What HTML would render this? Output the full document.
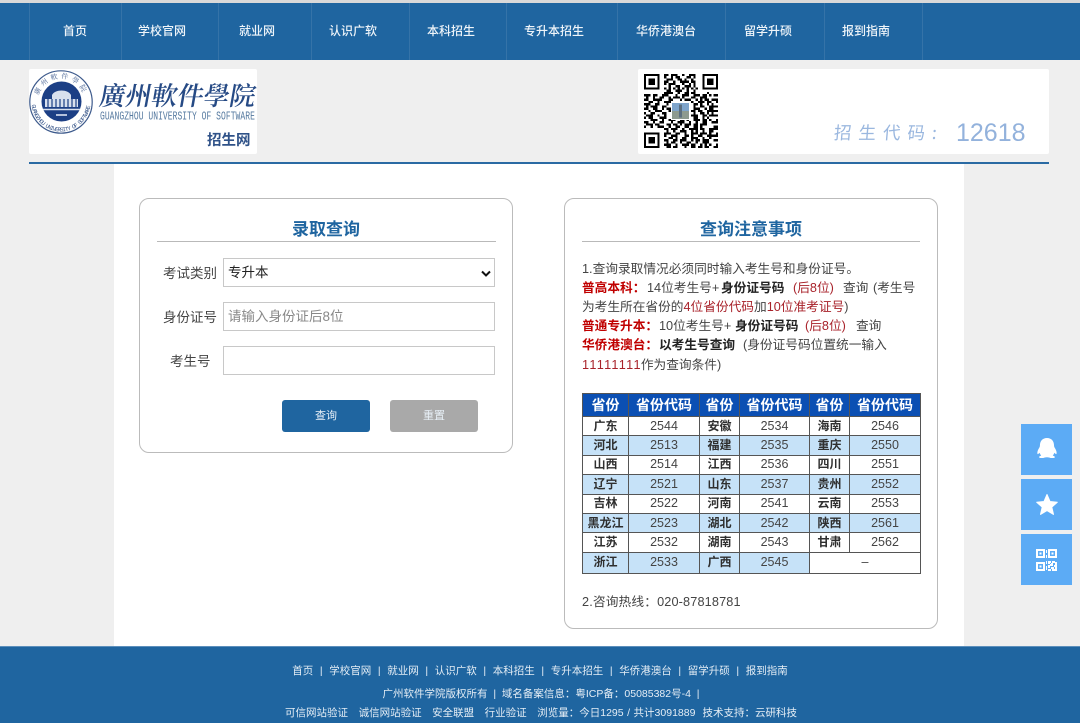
<!DOCTYPE html>
<html lang="zh-CN">
<head>
<meta charset="utf-8">
<title>录取查询</title>
<style>
html,body{margin:0;padding:0}
body{position:relative;width:1080px;height:723px;overflow:hidden;background:#efefef;font-family:"Liberation Sans","Noto Sans CJK SC",sans-serif;font-size:13px;color:#444;font-kerning:none}
.a{position:absolute}
.t{position:absolute;white-space:nowrap}
.nav{left:0;top:3px;width:1080px;height:57px;background:#1f65a0}
.sep{position:absolute;top:3px;width:1px;height:57px;background:#3573a8}
.nt{position:absolute;top:22px;line-height:18px;font-size:12px;color:#eef4f9;white-space:nowrap;transform:translateX(-50%);font-weight:500}
.card{position:absolute;background:#fff;border:1px solid #bbb;border-radius:10px;box-sizing:border-box}
.h{position:absolute;font-size:17px;font-weight:bold;color:#1f65a0;line-height:22px;white-space:nowrap;transform:translateX(-50%)}
.rule{position:absolute;height:1px;background:#b9b9b9}
.lab{position:absolute;font-size:13.5px;line-height:20px;color:#444;white-space:nowrap}
.box{position:absolute;left:223px;width:272px;height:29px;box-sizing:border-box;border:1px solid #c8c8c8;background:#fff;font-size:13.5px;line-height:28px;padding-left:4px}
.btn{position:absolute;top:400px;width:88px;height:32px;border-radius:3px;color:#e8f0f7;font-size:11px;line-height:33px;text-align:center}
.n{position:absolute;line-height:19px;font-size:12.7px;color:#444;white-space:nowrap}
.rb{color:#c00000;font-weight:bold}.d{color:#222;font-weight:bold}.m{color:#a8222a}
table{position:absolute;left:582px;top:393px;width:338px;border-collapse:collapse;table-layout:fixed;background:#fff;font-size:12.5px;color:#444}
td,th{border:1px solid #555;padding:0;text-align:center;line-height:17px;overflow:hidden;white-space:nowrap}
th{background:#0b4fb3;color:#fff;height:22px;font-size:14px}
td{height:18.4px}
td.p{font-weight:bold;color:#2f2f2f;font-size:12px}
tr.o td{background:#c6e2f8}
tr.o td.e{background:#fff}
.side{position:absolute;left:1021px;width:51px;height:51px;background:#5cabf5}
.f{position:absolute;left:0;top:646px;width:1080px;height:77px;background:#1f65a0}
.ft{position:absolute;left:540px;font-size:10.5px;line-height:16px;color:#e4edf5;white-space:nowrap;transform:translateX(-50%)}
</style>
</head>
<body>
<div class="a" style="left:0;top:0;width:1080px;height:3px;background:#d9d9d9"></div>
<div class="a nav"></div>
<i class="sep" style="left:29px"></i><i class="sep" style="left:121px"></i><i class="sep" style="left:218px"></i><i class="sep" style="left:311px"></i><i class="sep" style="left:409px"></i><i class="sep" style="left:506px"></i><i class="sep" style="left:617px"></i><i class="sep" style="left:725px"></i><i class="sep" style="left:824px"></i><i class="sep" style="left:922px"></i>
<span class="nt" style="left:75px">首页</span>
<span class="nt" style="left:162px">学校官网</span>
<span class="nt" style="left:257px">就业网</span>
<span class="nt" style="left:353px">认识广软</span>
<span class="nt" style="left:451px">本科招生</span>
<span class="nt" style="left:554px">专升本招生</span>
<span class="nt" style="left:666px">华侨港澳台</span>
<span class="nt" style="left:768px">留学升硕</span>
<span class="nt" style="left:866px">报到指南</span>

<!-- logo -->
<div class="a" style="left:29px;top:69px;width:228px;height:85px;background:#fff;border-radius:2px"></div>
<svg class="a" style="left:28px;top:69px" width="66" height="66" viewBox="0 0 66 66">
<defs>
<path id="ta" d="M9.500 33A23.500 23.500 0 0 1 56.500 33"/>
<path id="tb" d="M3.500 33A29.500 29.500 0 0 0 62.500 33"/>
</defs>
<circle cx="33" cy="33" r="31.2" fill="#fff" stroke="#3d5a8c" stroke-width="1.2"/>
<circle cx="33.500" cy="32.500" r="20" fill="#1c3f85"/>
<text font-size="7" letter-spacing="3" fill="#4a6595" font-family="'Noto Serif CJK SC',serif"><textPath href="#ta" startOffset="9%">廣州軟件學院</textPath></text>
<text font-size="6" fill="#3d5a8c" font-family="'Liberation Mono',monospace"><textPath href="#tb" startOffset="3%" textLength="86" lengthAdjust="spacing">GUANGZHOU UNIVERSITY OF SOFTWARE</textPath></text>
<path d="M17 38V30H50V38ZM24 30V26C27 20 40 20 43 26V30Z" fill="#d8e0ee"/>
<path d="M20 30v8M24 30v8M28 30v8M32 30v8M36 30v8M40 30v8M44 30v8M48 30v8" stroke="#1c3f85" stroke-width="1.200"/>
<path d="M15 40.500H52" stroke="#d8e0ee" stroke-width="1.600"/>
<path d="M28 46H39" stroke="#b5c2dc" stroke-width="2"/>
</svg>
<div class="t" style="left:100px;top:75px;font-family:'Noto Serif CJK SC','Noto Serif CJK TC',serif;font-size:26px;font-weight:600;line-height:40px;color:#264a85;transform:skewX(-10deg)">廣州軟件學院</div>
<div class="t" style="left:100px;top:112px;font-family:'Liberation Mono',monospace;font-size:8px;letter-spacing:.04px;line-height:12px;color:#55799f;transform:scaleY(1.5)">GUANGZHOU UNIVERSITY OF SOFTWARE</div>
<div class="t" style="left:207px;top:131px;font-size:14.5px;font-weight:bold;line-height:20px;color:#2f5288">招生网</div>

<!-- QR box -->
<div class="a" style="left:638px;top:69px;width:411px;height:85px;background:#fff;border-radius:2px"></div>
<svg class="a" style="left:644px;top:74px" width="74" height="74" viewBox="0 0 33 33" shape-rendering="crispEdges">
<path fill="none" stroke="#000" d="M9 .5h2m1 0h3m2 0h1m2 0h3M9 1.500h1m2 0h1m1 0h2m3 0h2m1 0h1M10 2.500h3m2 0h2m1 0h1m2 0h1M9 3.500h2m2 0h1m2 0h4m1 0h2M9 4.500h1m1 0h3m3 0h1m2 0h1m1 0h1M11 5.500h1m2 0h2m2 0h3m1 0h1M9 6.500h1m1 0h1m1 0h1m1 0h1m1 0h1m1 0h1m1 0h1m1 0h1M10 7.500h2m2 0h3m2 0h1m2 0h1M9 8.500h4m2 0h1m2 0h2m1 0h2M0 9.500h3m1 0h2m2 0h3m3 0h1m2 0h3m2 0h3m1 0h2m1 0h1M1 10.500h1m2 0h1m2 0h2m2 0h1m1 0h3m1 0h1m3 0h2m2 0h3M0 11.500h2m2 0h4m3 0h2m3 0h1m1 0h3m2 0h1m1 0h1m1 0h2M2 12.500h2m2 0h1m2 0h3m9 0h1m2 0h3m1 0h2M0 13.500h3m2 0h2m3 0h1m1 0h1m9 0h2m1 0h1m2 0h1m1 0h1M1 14.500h1m1 0h3m2 0h2m2 0h1m9 0h1m2 0h2m2 0h2M0 15.500h2m2 0h2m2 0h1m1 0h2m10 0h3m2 0h1m1 0h2M2 16.500h1m2 0h3m3 0h2m8 0h2m1 0h2m2 0h3M0 17.500h1m2 0h2m3 0h2m2 0h1m9 0h1m2 0h2m1 0h1m1 0h1M1 18.500h3m2 0h1m2 0h1m2 0h1m8 0h3m2 0h2m1 0h2M0 19.500h1m1 0h2m3 0h3m2 0h1m1 0h1m2 0h3m2 0h2m2 0h1m1 0h1M3 20.500h3m2 0h1m2 0h3m2 0h2m1 0h1m2 0h3m1 0h2m1 0h1M0 21.500h2m2 0h1m2 0h2m3 0h1m2 0h3m2 0h1m2 0h1m2 0h2M1 22.500h3m1 0h2m3 0h2m1 0h2m1 0h1m1 0h3m1 0h2m1 0h3M0 23.500h1m2 0h1m2 0h3m2 0h1m2 0h2m2 0h2m2 0h2m1 0h1M9 24.500h2m1 0h3m2 0h1m2 0h4m1 0h2m2 0h2M10 25.500h1m2 0h1m2 0h3m2 0h1m1 0h1m2 0h1m2 0h2M9 26.500h3m2 0h2m2 0h1m2 0h3m1 0h3m1 0h1M9 27.500h1m2 0h3m3 0h2m1 0h1m2 0h2m2 0h2M11 28.500h2m1 0h1m2 0h2m2 0h3m2 0h1m2 0h1M9 29.500h2m2 0h2m1 0h3m2 0h1m1 0h2m1 0h3M10 30.500h1m1 0h2m2 0h1m2 0h2m2 0h1m2 0h3M9 31.500h3m2 0h1m2 0h3m1 0h2m2 0h1m1 0h1m1 0h1M10 32.500h2m1 0h2m3 0h1m2 0h2m1 0h2m1 0h2M31 9.500h2M30 11.500h3M32 12.500h1M31 14.500h2M30 16.500h3M31 18.500h2M32 20.500h1M30 21.500h3M31 23.500h2M30 24.500h3M32 26.500h1M30 27.500h3M31 29.500h2M32 31.500h1M31 32.500h2M28 8.500h1"/>
<path d="M0 0h7v7H0zM1 1v5h5V1zM2 2h3v3H2zM26 0h7v7h-7zM27 1v5h5V1zM28 2h3v3h-3zM0 26h7v7H0zM1 27v5h5v-5zM2 28h3v3H2z" fill="#000" fill-rule="evenodd"/>
<rect x="12" y="12.500" width="8.500" height="8" fill="#fff"/>
<rect x="12.500" y="13" width="7.500" height="7" fill="#7fa5cc"/>
<rect x="12.500" y="16.500" width="7.500" height="3.500" fill="#8d9a8f"/>
<path d="M15.500 13.500h1.500v6h-1.500z" fill="#5c6f80"/>
</svg>
<div class="t" style="left:834px;top:119px;font-family:'Noto Sans CJK SC',sans-serif;font-size:17.500px;letter-spacing:7px;line-height:28px;color:#9ab7df;transform:skewX(-5deg)">招生代码:</div>
<div class="t" style="left:956px;top:117px;font-size:25px;line-height:32px;color:#93b2dc">12618</div>
<div class="a" style="left:29px;top:162px;width:1020px;height:2px;background:#2a6aa3"></div>

<!-- main -->
<div class="a" style="left:114px;top:164px;width:850px;height:482px;background:#fff"></div>

<div class="card" style="left:139px;top:198px;width:374px;height:255px"></div>
<span class="h" style="left:326px;top:219px">录取查询</span>
<div class="rule" style="left:157px;top:241px;width:339px"></div>
<span class="lab" style="left:163px;top:264px">考试类别</span>
<div class="box" style="top:258px;color:#222">专升本
<svg class="a" style="right:3px;top:11px" width="10" height="8" viewBox="0 0 10 8"><path d="M1 1.500L5 5.500L9 1.500" fill="none" stroke="#111" stroke-width="2"/></svg>
</div>
<span class="lab" style="left:163px;top:308px">身份证号</span>
<div class="box" style="top:302px;color:#888">请输入身份证后8位</div>
<span class="lab" style="left:170px;top:352px">考生号</span>
<div class="box" style="top:346px"></div>
<div class="btn" style="left:282px;background:#1f65a0">查询</div>
<div class="btn" style="left:390px;background:#a9a9a9">重置</div>

<div class="card" style="left:564px;top:198px;width:374px;height:431px"></div>
<span class="h" style="left:751px;top:219px">查询注意事项</span>
<div class="rule" style="left:582px;top:241px;width:338px"></div>
<div class="n" style="left:582px;top:260px">1.查询录取情况必须同时输入考生号和身份证号。</div>

<div class="n rb" style="left:582px;top:279px">普高本科：</div>
<div class="n" style="left:647px;top:279px">14位考生号+</div>
<div class="n d" style="left:721px;top:279px">身份证号码</div>
<div class="n m" style="left:793px;top:279px">(后8位)</div>
<div class="n" style="left:843px;top:279px">查询</div>
<div class="n" style="left:873px;top:279px">(考生号</div>

<div class="n" style="left:582px;top:298px">为考生所在省份的<span class="m">4位省份代码</span>加<span class="m">10位准考证号</span>)</div>

<div class="n rb" style="left:582px;top:317px">普通专升本：</div>
<div class="n" style="left:659px;top:317px">10位考生号+</div>
<div class="n d" style="left:735px;top:317px">身份证号码</div>
<div class="n m" style="left:805px;top:317px">(后8位)</div>
<div class="n" style="left:856px;top:317px">查询</div>

<div class="n rb" style="left:582px;top:336px">华侨港澳台：</div>
<div class="n d" style="left:659px;top:336px">以考生号查询</div>
<div class="n" style="left:743px;top:336px">(身份证号码位置统一输入</div>

<div class="n" style="left:582px;top:356px"><span class="m" style="letter-spacing:.3px">11111111</span>作为查询条件)</div>

<table>
<colgroup><col style="width:46px"><col style="width:71px"><col style="width:40px"><col style="width:70px"><col style="width:40px"><col style="width:71px"></colgroup>
<tr><th>省份</th><th>省份代码</th><th>省份</th><th>省份代码</th><th>省份</th><th>省份代码</th></tr>
<tr><td class="p">广东</td><td>2544</td><td class="p">安徽</td><td>2534</td><td class="p">海南</td><td>2546</td></tr>
<tr class="o"><td class="p">河北</td><td>2513</td><td class="p">福建</td><td>2535</td><td class="p">重庆</td><td>2550</td></tr>
<tr><td class="p">山西</td><td>2514</td><td class="p">江西</td><td>2536</td><td class="p">四川</td><td>2551</td></tr>
<tr class="o"><td class="p">辽宁</td><td>2521</td><td class="p">山东</td><td>2537</td><td class="p">贵州</td><td>2552</td></tr>
<tr><td class="p">吉林</td><td>2522</td><td class="p">河南</td><td>2541</td><td class="p">云南</td><td>2553</td></tr>
<tr class="o"><td class="p">黑龙江</td><td>2523</td><td class="p">湖北</td><td>2542</td><td class="p">陕西</td><td>2561</td></tr>
<tr><td class="p">江苏</td><td>2532</td><td class="p">湖南</td><td>2543</td><td class="p">甘肃</td><td>2562</td></tr>
<tr class="o"><td class="p" style="height:20px">浙江</td><td>2533</td><td class="p">广西</td><td>2545</td><td class="e" colspan="2">–</td></tr>
</table>
<div class="n" style="left:582px;top:593px;letter-spacing:.15px">2.咨询热线：020-87818781</div>

<!-- side -->
<div class="side" style="top:424px"><svg width="51" height="51" viewBox="0 0 51 51"><path transform="translate(4.400 2.400) scale(.83)" d="M26 14c-5.500 0-8.500 4-8.500 9 0 1-.3 2-1 3-1.500 2.300-2.500 5-2 7 .4 1 1.500 0 2.500-1.200.5 1.300 1.200 2.400 2 3.200-1 .5-2.500 1-2.500 2 0 1.200 3 1.300 5 1 1.300-.3 2.500-.8 4.500-.8s3.200.5 4.500.8c2 .3 5 .2 5-1 0-1-1.500-1.500-2.500-2 .8-.8 1.500-1.900 2-3.200 1 1.200 2.100 2.200 2.500 1.200.5-2-.5-4.700-2-7-.7-1-1-2-1-3 0-5-3-9-8.500-9z" fill="#fff"/></svg></div>
<div class="side" style="top:479px"><svg width="51" height="51" viewBox="0 0 51 51"><path d="M26 15.500l3 7 7.300.7-5.500 4.900 1.700 7.300L26 31.600l-6.500 3.800 1.700-7.300-5.500-4.900 7.300-.7z" fill="#fff" stroke="#fff" stroke-width="1" stroke-linejoin="round"/></svg></div>
<div class="side" style="top:534px"><svg width="51" height="51" viewBox="0 0 51 51"><path fill="#fff" fill-rule="evenodd" d="M15 15h9v9h-9zM17 17v5h5v-5zM18.500 18.500h2v2h-2zM27 15h9v9h-9zM29 17v5h5v-5zM30.500 18.500h2v2h-2zM15 28h9v9h-9zM17 30v5h5v-5zM18.500 31.500h2v2h-2zM27 27h3v3h-3zM31 27h3v2h-3zM34 28h2v3h-2zM29 29h3v3h-3zM33 31h3v2h-3zM27 31h2v3h-2zM30 33h3v2h-3zM34 33h2v4h-2zM27 35h3v2h-3zM31 35h3v2h-3zM25 16h1v3h-1zM25 21h1v3h-1zM25 27h1v3h-1zM25 32h1v4h-1z"/></svg></div>

<!-- footer -->
<div class="f"></div>
<div class="a" style="left:0;top:646px;width:1080px;height:1px;background:#5c8fbc"></div>
<div class="ft" style="top:663px;word-spacing:.4px">首页 &nbsp;|&nbsp; 学校官网 &nbsp;|&nbsp; 就业网 &nbsp;|&nbsp; 认识广软 &nbsp;|&nbsp; 本科招生 &nbsp;|&nbsp; 专升本招生 &nbsp;|&nbsp; 华侨港澳台 &nbsp;|&nbsp; 留学升硕 &nbsp;|&nbsp; 报到指南</div>
<div class="ft" style="top:686px;margin-left:1px">广州软件学院版权所有 &nbsp;|&nbsp; 域名备案信息：粤ICP备：05085382号-4 &nbsp;|</div>
<div class="ft" style="top:705px;margin-left:1px;word-spacing:.6px">可信网站验证 &nbsp; 诚信网站验证 &nbsp; 安全联盟 &nbsp; 行业验证 &nbsp; 浏览量：今日1295 / 共计3091889 &nbsp;技术支持：云研科技</div>
</body>
</html>
